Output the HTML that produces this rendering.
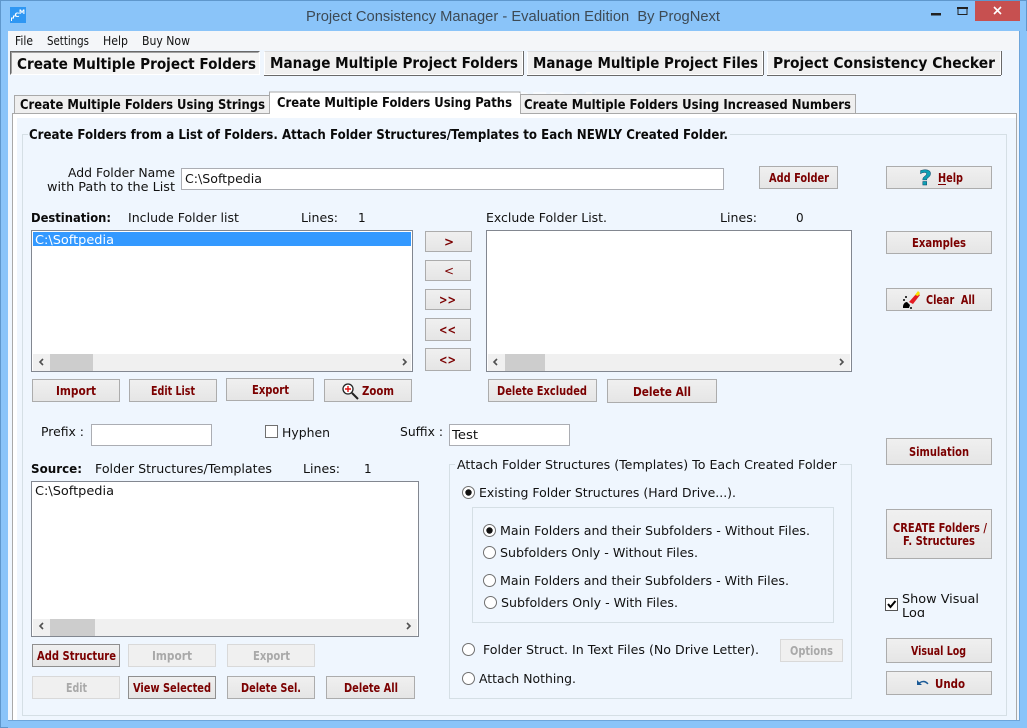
<!DOCTYPE html>
<html><head><meta charset="utf-8"><title>Project Consistency Manager</title>
<style>
html,body{margin:0;padding:0;background:#8ac4f9;width:1027px;height:728px;overflow:hidden}
svg{display:block}
text{white-space:pre;font-family:"DejaVu Sans","Liberation Sans",sans-serif;font-size:12px;fill:#111}
.t{font-family:"Liberation Sans",sans-serif;font-size:15px;fill:#3d4a55}
.bb{font-family:"DejaVu Sans",sans-serif;font-weight:bold;font-size:15px;fill:#0a0a0a}
.tb{font-family:"DejaVu Sans",sans-serif;font-weight:bold;font-size:13px;fill:#0a0a0a}
.m{font-family:"DejaVu Sans",sans-serif;font-weight:bold;font-size:12px;fill:#7b0000}
.d{font-family:"DejaVu Sans",sans-serif;font-weight:bold;font-size:12px;fill:#a9a9a9}
.btn{fill:url(#g);stroke:#acacac}
.dis{fill:#f0f0f0;stroke:#d9d9d9}
.in{fill:#fff;stroke:#abadb3}
.ls{fill:#fff;stroke:#828790}
.gb{fill:none;stroke:#d5dfe5}
.r{fill:#fff;stroke:#707070}
</style></head><body>
<svg width="1027" height="728" viewBox="0 0 1027 728" xmlns="http://www.w3.org/2000/svg" shape-rendering="crispEdges">
<defs><linearGradient id="g" x1="0" y1="0" x2="0" y2="1"><stop offset="0" stop-color="#f0f0f0"/><stop offset="1" stop-color="#e5e5e5"/></linearGradient></defs>
<rect x="0.5" y="0.5" width="1026" height="727" fill="#8ac4f9" stroke="#5f97cc"/>
<!-- title -->
<rect x="10" y="7" width="16" height="16" fill="#2f97f3"/>
<path d="M11.500 21v-3h2v-2h2" fill="none" stroke="#fff" stroke-width="1.300"/>
<text x="14.500" y="17" textLength="5" lengthAdjust="spacingAndGlyphs" style="font-size:6px;font-weight:bold;fill:#fff">C</text>
<text x="19" y="14" textLength="6" lengthAdjust="spacingAndGlyphs" style="font-size:6px;font-weight:bold;fill:#fff">M</text>
<text class="t" x="306" y="21" textLength="414" lengthAdjust="spacingAndGlyphs">Project Consistency Manager - Evaluation Edition  By ProgNext</text>
<rect x="931" y="13" width="10" height="2.5" fill="#222"/>
<rect x="958" y="8.5" width="9" height="6" fill="none" stroke="#222"/><rect x="957" y="7" width="11" height="2" fill="#222"/>
<rect x="975" y="1" width="45" height="20" fill="#c75050"/>
<path d="M994 7l7 7M1001 7l-7 7" stroke="#fff" stroke-width="1.6" fill="none" shape-rendering="auto"/>
<!-- client -->
<rect x="8" y="31" width="1011" height="689" fill="#eff6fe"/>
<rect x="8" y="31" width="1011" height="19" fill="#f4f6f9"/>
<rect x="8" y="720" width="1011" height="1" fill="#6ea5da"/>
<text x="15" y="45" textLength="18" lengthAdjust="spacingAndGlyphs">File</text>
<text x="47" y="45" textLength="42" lengthAdjust="spacingAndGlyphs">Settings</text>
<text x="103" y="45" textLength="25" lengthAdjust="spacingAndGlyphs">Help</text>
<text x="142" y="45" textLength="48" lengthAdjust="spacingAndGlyphs">Buy Now</text>
<!-- top buttons -->
<rect x="10.5" y="51.5" width="249" height="23" fill="#f4f4f4" stroke="#fff"/>
<path d="M10.5 74.5v-23h249" fill="none" stroke="#696969" stroke-width="1"/>
<path d="M11.5 73.5v-21h247" fill="none" stroke="#a0a0a0"/>
<rect x="264.5" y="51.5" width="258" height="23" fill="#f0f0f0" stroke="#fff"/><path d="M264 75.5h259M523.5 75v-24" stroke="#696969" fill="none"/><path d="M264.5 51.5h258" stroke="#ddd"/>
<rect x="527.5" y="51.5" width="235" height="23" fill="#f0f0f0" stroke="#fff"/><path d="M527 75.5h236M763.5 75v-24" stroke="#696969" fill="none"/><path d="M527.5 51.5h235" stroke="#ddd"/>
<rect x="767.5" y="51.5" width="233" height="23" fill="#f0f0f0" stroke="#fff"/><path d="M767 75.5h234M1001.5 75v-24" stroke="#696969" fill="none"/><path d="M767.5 51.5h233" stroke="#ddd"/>
<text class="bb" x="17" y="69" textLength="239" lengthAdjust="spacingAndGlyphs">Create Multiple Project Folders</text>
<text class="bb" x="270" y="68" textLength="248" lengthAdjust="spacingAndGlyphs">Manage Multiple Project Folders</text>
<text class="bb" x="533" y="68" textLength="225" lengthAdjust="spacingAndGlyphs">Manage Multiple Project Files</text>
<text class="bb" x="773" y="68" textLength="222" lengthAdjust="spacingAndGlyphs">Project Consistency Checker</text>
<!-- watermark -->
<text x="437" y="110" textLength="162" lengthAdjust="spacingAndGlyphs" style="font-size:25px;font-weight:bold;fill:#fff;opacity:.6">SOFTPEDIA</text>
<!-- tab panel -->
<rect x="12.5" y="113.5" width="1004" height="620" fill="#fff" stroke="#a9a9a9"/>
<rect x="17" y="118" width="1002" height="602" fill="#eff6fe"/>
<rect x="8" y="720" width="1011" height="8" fill="#8ac4f9"/><rect x="8" y="720" width="1011" height="1" fill="#6ea5da"/>
<rect x="1016" y="114" width="1" height="606" fill="#a9a9a9"/>
<rect x="1019" y="31" width="8" height="697" fill="#8ac4f9"/><rect x="1019" y="31" width="1" height="690" fill="#6ea5da"/>
<rect x="14.5" y="95.5" width="255" height="18" fill="#efefef" stroke="#a9a9a9"/>
<rect x="520.5" y="94.5" width="335" height="19" fill="#efefef" stroke="#a9a9a9"/>
<path d="M269.5 114v-22h250.5v22" fill="#fff" stroke="#a9a9a9"/>
<rect x="270" y="93" width="250" height="22" fill="#fff"/>
<text class="tb" x="20" y="109" textLength="245" lengthAdjust="spacingAndGlyphs">Create Multiple Folders Using Strings</text>
<text class="tb" x="277" y="107" textLength="235" lengthAdjust="spacingAndGlyphs">Create Multiple Folders Using Paths</text>
<text class="tb" x="524" y="109" textLength="327" lengthAdjust="spacingAndGlyphs">Create Multiple Folders Using Increased Numbers</text>
<!-- main group -->
<rect x="22.5" y="134.5" width="984" height="581" class="gb"/>
<rect x="28" y="128" width="702" height="14" fill="#eff6fe"/>
<text class="tb" x="29" y="139" textLength="699" lengthAdjust="spacingAndGlyphs">Create Folders from a List of Folders. Attach Folder Structures/Templates to Each NEWLY Created Folder.</text>
<text x="68" y="177" textLength="107" lengthAdjust="spacingAndGlyphs">Add Folder Name</text>
<text x="47" y="191" textLength="128" lengthAdjust="spacingAndGlyphs">with Path to the List</text>
<rect x="181.5" y="168.5" width="542" height="21" class="in"/>
<text x="185" y="183" textLength="77" lengthAdjust="spacingAndGlyphs">C:\Softpedia</text>
<rect x="759.5" y="166.5" width="78" height="22" class="btn"/><text class="m" x="769" y="182" textLength="60" lengthAdjust="spacingAndGlyphs">Add Folder</text>
<rect x="886.5" y="166.5" width="105" height="22" class="btn"/>
<text x="919" y="185" style="font-size:20px;font-weight:bold;fill:#0fa0b4;stroke:#0a3c60;stroke-width:.4" textLength="13" lengthAdjust="spacingAndGlyphs">?</text>
<text class="m" x="938" y="182" textLength="25" lengthAdjust="spacingAndGlyphs">Help</text>
<rect x="938" y="184" width="8" height="1" fill="#7b0000"/>
<rect x="886.5" y="231.5" width="105" height="22" class="btn"/><text class="m" x="912" y="247" textLength="54" lengthAdjust="spacingAndGlyphs">Examples</text>
<rect x="886.5" y="288.5" width="105" height="22" class="btn"/><text class="m" x="926" y="304" textLength="49" lengthAdjust="spacingAndGlyphs" xml:space="preserve">Clear  All</text>
<g shape-rendering="auto"><path d="M909 302l8-9 3 2-7 9z" fill="#e31b23"/><path d="M915 295l3-4 2 2-2 3z" fill="#f7e300"/><path d="M903 306q1-4 4-4l3 3-1 3h-6z" fill="#000"/><circle cx="906" cy="297" r="1" fill="#000"/><circle cx="911" cy="308" r="1" fill="#000"/><circle cx="904" cy="300" r="1" fill="#000"/></g>
<!-- destination -->
<text class="tb" style="font-size:12px" x="31" y="222" textLength="80" lengthAdjust="spacingAndGlyphs">Destination:</text>
<text x="128" y="222" textLength="111" lengthAdjust="spacingAndGlyphs">Include Folder list</text>
<text x="301" y="222" textLength="37" lengthAdjust="spacingAndGlyphs">Lines:</text>
<text x="358" y="222">1</text>
<text x="486" y="222" textLength="121" lengthAdjust="spacingAndGlyphs">Exclude Folder List.</text>
<text x="720" y="222" textLength="37" lengthAdjust="spacingAndGlyphs">Lines:</text>
<text x="796" y="222">0</text>
<rect x="31.5" y="230.5" width="381" height="141" class="ls"/>
<rect x="33" y="232" width="378" height="14" fill="#3399ff"/>
<text x="35" y="244" textLength="79" lengthAdjust="spacingAndGlyphs" style="fill:#fff">C:\Softpedia</text>
<rect x="33" y="354" width="378" height="17" fill="#f0f0f0"/><rect x="50" y="354" width="43" height="17" fill="#cdcdcd"/>
<path d="M43 359l-3 3 3 3M403 359l3 3-3 3" fill="none" stroke="#505050" stroke-width="1.6" shape-rendering="auto"/>
<rect x="486.5" y="230.5" width="365" height="141" class="ls"/>
<rect x="488" y="354" width="362" height="17" fill="#f0f0f0"/><rect x="505" y="354" width="40" height="17" fill="#cdcdcd"/>
<path d="M497 359l-3 3 3 3M840 359l3 3-3 3" fill="none" stroke="#505050" stroke-width="1.6" shape-rendering="auto"/>
<!-- middle -->
<rect x="425.5" y="231.5" width="46" height="20" class="btn"/><text class="m" x="444" y="246">&gt;</text>
<rect x="425.5" y="260.5" width="45" height="20" class="btn"/><text class="m" style="font-weight:normal" x="444" y="275">&lt;</text>
<rect x="425.5" y="289.5" width="45" height="20" class="btn"/><text class="m" x="439" y="304" textLength="17" lengthAdjust="spacingAndGlyphs">&gt;&gt;</text>
<rect x="425.5" y="318.5" width="45" height="22" class="btn"/><text class="m" x="439" y="334" textLength="17" lengthAdjust="spacingAndGlyphs">&lt;&lt;</text>
<rect x="425.5" y="348.5" width="45" height="22" class="btn"/><text class="m" x="439" y="364" textLength="17" lengthAdjust="spacingAndGlyphs">&lt;&gt;</text>
<!-- row -->
<rect x="32.5" y="379.5" width="87" height="22" class="btn"/><text class="m" x="56" y="395" textLength="40" lengthAdjust="spacingAndGlyphs">Import</text>
<rect x="129.5" y="379.5" width="87" height="22" class="btn"/><text class="m" x="151" y="395" textLength="44" lengthAdjust="spacingAndGlyphs">Edit List</text>
<rect x="226.5" y="378.5" width="87" height="22" class="btn"/><text class="m" x="252" y="394" textLength="37" lengthAdjust="spacingAndGlyphs">Export</text>
<rect x="324.5" y="379.5" width="87" height="22" class="btn"/><text class="m" x="362" y="395" textLength="32" lengthAdjust="spacingAndGlyphs">Zoom</text>
<g shape-rendering="auto"><circle cx="348" cy="389" r="5" fill="#fff" stroke="#222" stroke-width="1.3"/><path d="M352 393l6 6" stroke="#222" stroke-width="2"/><path d="M348 386v6M345 389h6" stroke="#e01010" stroke-width="1.4"/></g>
<rect x="488.5" y="379.5" width="108" height="22" class="btn"/><text class="m" x="497" y="395" textLength="90" lengthAdjust="spacingAndGlyphs">Delete Excluded</text>
<rect x="607.5" y="379.5" width="109" height="23" class="btn"/><text class="m" x="633" y="396" textLength="58" lengthAdjust="spacingAndGlyphs">Delete All</text>
<!-- prefix -->
<text x="41" y="436" textLength="43" lengthAdjust="spacingAndGlyphs">Prefix :</text>
<rect x="91.5" y="424.5" width="120" height="21" class="in"/>
<rect x="265.5" y="425.5" width="12" height="12" fill="#fff" stroke="#707070"/>
<text x="282" y="437" textLength="48" lengthAdjust="spacingAndGlyphs">Hyphen</text>
<text x="400" y="436" textLength="43" lengthAdjust="spacingAndGlyphs">Suffix :</text>
<rect x="449.5" y="424.5" width="120" height="21" class="in"/>
<text x="452" y="439" textLength="26" lengthAdjust="spacingAndGlyphs">Test</text>
<!-- source -->
<text class="tb" style="font-size:12px" x="31" y="473" textLength="51" lengthAdjust="spacingAndGlyphs">Source:</text>
<text x="95" y="473" textLength="177" lengthAdjust="spacingAndGlyphs">Folder Structures/Templates</text>
<text x="303" y="473" textLength="37" lengthAdjust="spacingAndGlyphs">Lines:</text>
<text x="364" y="473">1</text>
<rect x="31.5" y="481.5" width="387" height="155" class="ls"/>
<text x="35" y="495" textLength="79" lengthAdjust="spacingAndGlyphs">C:\Softpedia</text>
<rect x="33" y="619" width="384" height="17" fill="#f0f0f0"/><rect x="50" y="619" width="45" height="17" fill="#cdcdcd"/>
<path d="M43 623l-3 3 3 3M407 623l3 3-3 3" fill="none" stroke="#505050" stroke-width="1.6" shape-rendering="auto"/>
<rect x="32.5" y="644.5" width="87" height="22" class="btn" style="stroke:#8f8f8f"/><text class="m" x="37" y="660" textLength="79" lengthAdjust="spacingAndGlyphs">Add Structure</text>
<rect x="128.5" y="644.5" width="87" height="22" class="dis"/><text class="d" x="152" y="660" textLength="40" lengthAdjust="spacingAndGlyphs">Import</text>
<rect x="227.5" y="644.5" width="87" height="22" class="dis"/><text class="d" x="253" y="660" textLength="37" lengthAdjust="spacingAndGlyphs">Export</text>
<rect x="32.5" y="676.5" width="87" height="22" class="dis"/><text class="d" x="66" y="692" textLength="21" lengthAdjust="spacingAndGlyphs">Edit</text>
<rect x="128.5" y="676.5" width="87" height="22" class="btn" style="stroke:#8f8f8f"/><text class="m" x="133" y="692" textLength="78" lengthAdjust="spacingAndGlyphs">View Selected</text>
<rect x="227.5" y="676.5" width="87" height="22" class="btn"/><text class="m" x="241" y="692" textLength="60" lengthAdjust="spacingAndGlyphs">Delete Sel.</text>
<rect x="326.5" y="676.5" width="88" height="22" class="btn"/><text class="m" x="344" y="692" textLength="54" lengthAdjust="spacingAndGlyphs">Delete All</text>
<!-- group 2 -->
<rect x="449.5" y="464.5" width="402" height="234" class="gb"/>
<rect x="455" y="458" width="385" height="14" fill="#eff6fe"/>
<text x="457" y="469" textLength="380" lengthAdjust="spacingAndGlyphs">Attach Folder Structures (Templates) To Each Created Folder</text>
<rect x="472.5" y="507.5" width="361" height="115" class="gb"/>
<g shape-rendering="auto">
<circle cx="468.5" cy="492.5" r="6" class="r"/><circle cx="468.5" cy="492.5" r="3.2" fill="#111"/>
<circle cx="489.5" cy="530.5" r="6" class="r"/><circle cx="489.5" cy="530.5" r="3.2" fill="#111"/>
<circle cx="489.5" cy="552.5" r="6" class="r"/>
<circle cx="489.5" cy="580.5" r="6" class="r"/>
<circle cx="490.5" cy="602.5" r="6" class="r"/>
<circle cx="468.5" cy="649.5" r="6" class="r"/>
<circle cx="468.5" cy="678.5" r="6" class="r"/>
</g>
<text x="479" y="497" textLength="257" lengthAdjust="spacingAndGlyphs">Existing Folder Structures (Hard Drive...).</text>
<text x="500" y="535" textLength="310" lengthAdjust="spacingAndGlyphs">Main Folders and their Subfolders - Without Files.</text>
<text x="500" y="557" textLength="198" lengthAdjust="spacingAndGlyphs">Subfolders Only - Without Files.</text>
<text x="500" y="585" textLength="289" lengthAdjust="spacingAndGlyphs">Main Folders and their Subfolders - With Files.</text>
<text x="501" y="607" textLength="177" lengthAdjust="spacingAndGlyphs">Subfolders Only - With Files.</text>
<text x="483" y="654" textLength="276" lengthAdjust="spacingAndGlyphs">Folder Struct. In Text Files (No Drive Letter).</text>
<rect x="780.5" y="639.5" width="62" height="22" class="dis"/><text class="d" x="790" y="655" textLength="43" lengthAdjust="spacingAndGlyphs">Options</text>
<text x="479" y="683" textLength="97" lengthAdjust="spacingAndGlyphs">Attach Nothing.</text>
<!-- right -->
<rect x="886.5" y="438.5" width="105" height="26" class="btn"/><text class="m" x="909" y="456" textLength="60" lengthAdjust="spacingAndGlyphs">Simulation</text>
<rect x="886.5" y="509.5" width="105" height="49" class="btn"/>
<text class="m" x="893" y="532" textLength="94" lengthAdjust="spacingAndGlyphs">CREATE Folders /</text>
<text class="m" x="903" y="545" textLength="72" lengthAdjust="spacingAndGlyphs">F. Structures</text>
<rect x="885.5" y="598.5" width="12" height="12" fill="#fff" stroke="#555"/>
<path d="M888 604l2.5 3 5-6" fill="none" stroke="#000" stroke-width="2" shape-rendering="auto"/>
<text x="902" y="603" textLength="77" lengthAdjust="spacingAndGlyphs">Show Visual</text>
<svg x="900" y="606" width="40" height="11"><text x="2" y="11" textLength="23" lengthAdjust="spacingAndGlyphs">Log</text></svg>
<rect x="886.5" y="638.5" width="105" height="24" class="btn"/><text class="m" x="911" y="655" textLength="55" lengthAdjust="spacingAndGlyphs">Visual Log</text>
<rect x="886.5" y="671.5" width="105" height="23" class="btn"/>
<path d="M917 680v5h5l-1.800-1.800q3.500-2.500 7.300 1.200l1-1q-4-4.500-9.300-1.200z" fill="#1b5a96" shape-rendering="auto"/>
<text class="m" x="935" y="688" textLength="30" lengthAdjust="spacingAndGlyphs">Undo</text>
</svg>
</body></html>
